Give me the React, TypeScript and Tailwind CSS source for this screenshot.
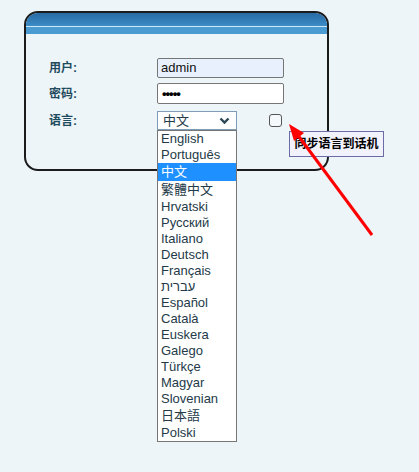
const languages = [
  "English",
  "Português",
  "中文",
  "繁體中文",
  "Hrvatski",
  "Русский",
  "Italiano",
  "Deutsch",
  "Français",
  "עברית",
  "Español",
  "Català",
  "Euskera",
  "Galego",
  "Türkçe",
  "Magyar",
  "Slovenian",
  "日本語",
  "Polski",
];

const cjk = ["中文", "繁體中文", "日本語"];

const sans = "font-['Liberation_Sans','Noto_Sans_CJK_SC',sans-serif]";

function Chevron() {
  return (
    <svg width="11" height="8" viewBox="0 0 11 8" className="text-[#2b4656]">
      <path d="M1.5 1.5 L5.5 5.5 L9.5 1.5" fill="none" stroke="currentColor" strokeWidth="2.4" />
    </svg>
  );
}

export default function App() {
  return (
    <div className={`relative min-h-[472px] bg-[#eef5f8] pt-[11px] pl-[24px] ${sans}`}>
      <div className="relative w-[305px] h-[160px] rounded-[14px] border-2 border-[#1b1b1b]">
        {/* header bar */}
        <div className="rounded-t-[12px] overflow-hidden">
          <div className="h-[13px] bg-gradient-to-b from-[#286aa3] to-[#3c8cc6]" />
          <div className="h-px bg-[#cfe7f6]" />
          <div className="h-[7px] bg-[#4a9bd2]" />
        </div>

        <div className="pt-[24px] pl-[23px] grid grid-cols-[108px_auto] items-center text-[12px]">
          <div className="font-bold text-[#1f4b5e] h-[20px] flex items-center">用户:</div>
          <div className="w-[127px] h-[20px] rounded-[2px] border border-[#767676] bg-[#e8f0fe] pl-[3px] flex items-center text-[13px] text-[#111]">
            admin
          </div>

          <div className="font-bold text-[#1f4b5e] h-[21px] mt-[5px] flex items-center">密码:</div>
          <div className="mt-[5px] w-[127px] h-[21px] rounded-[2px] border border-[#767676] bg-white pl-[4px] flex items-center text-[13px] text-black tracking-[-1px] font-bold">
            •••••
          </div>

          <div className="font-bold text-[#1f4b5e] h-[19px] mt-[7px] flex items-center">语言:</div>
          <div className="mt-[7px] flex items-center">
            <div className="relative w-[80px] h-[19px] border border-[#7f9db9] bg-white pl-[5px] pr-[6px] flex items-center justify-between text-[13px] text-[#233a48]">
              <span>中文</span>
              <Chevron />
              <ul className="absolute left-[-1px] top-[18px] w-[80px] border border-[#767676] bg-white z-10">
                {languages.map((l) => (
                  <li
                    key={l}
                    className={`pl-[3px] text-[13px] flex items-center ${
                      cjk.includes(l) ? "h-[18px]" : "h-[16px]"
                    } ${l === "中文" ? "bg-[#1e90ff] text-white" : "text-[#233a48]"}`}
                  >
                    {l}
                  </li>
                ))}
              </ul>
            </div>
            <div className="ml-[32px] w-[13px] h-[13px] rounded-[3px] border border-[#555] bg-[#f6f9fb]" />
          </div>
        </div>

        {/* tooltip */}
        <div className="absolute left-[263px] top-[118px] w-[95px] h-[26px] border border-[#6b6ba8] bg-[#f2f2fc] flex items-center justify-center text-[12px] font-bold text-black z-10">
          同步语言到话机
        </div>
      </div>

      {/* red arrow */}
      <svg className="absolute left-0 top-0 z-20" width="419" height="472" viewBox="0 0 419 472">
        <line x1="372" y1="235" x2="297" y2="134" stroke="#ff0000" strokeWidth="3" />
        <polygon points="289,124 304,133 294,141" fill="#ff0000" />
      </svg>
    </div>
  );
}
